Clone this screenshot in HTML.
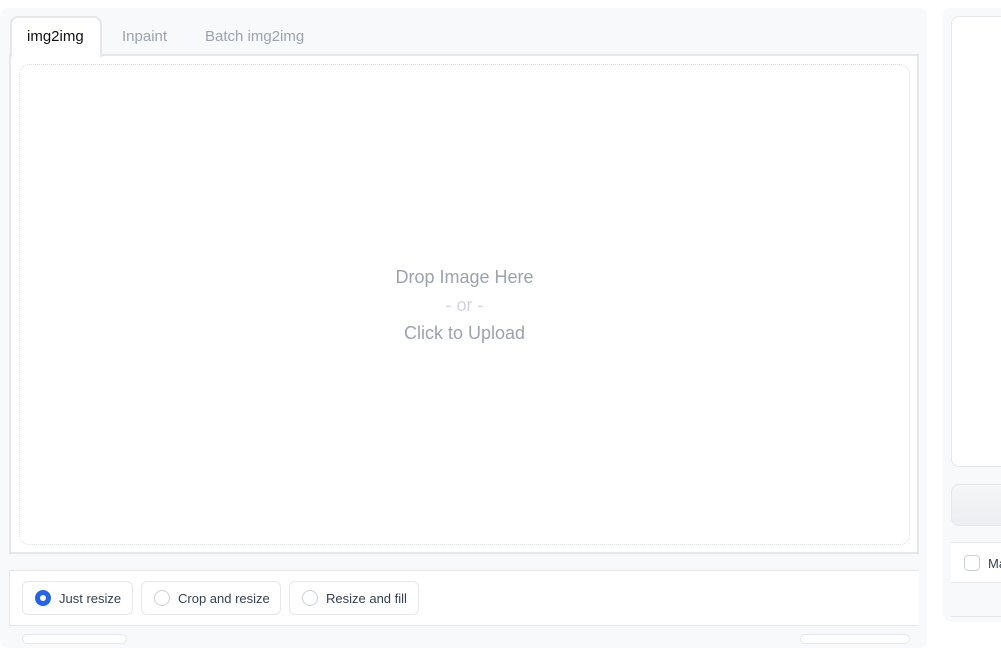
<!DOCTYPE html>
<html><head><style>
*{box-sizing:border-box;margin:0;padding:0}
body{width:1001px;height:638px;background:#fff;font-family:"Liberation Sans",sans-serif;position:relative;overflow:hidden}
.a{position:absolute}
</style></head><body>
<div class="a" style="left:0;top:8px;width:927px;height:640px;background:#f8f9fb;border-radius:8px"></div>
<div class="a" style="left:943px;top:8px;width:70px;height:614px;background:#f8f9fb;border-radius:8px"></div>
<div class="a" style="left:951px;top:16px;width:60px;height:451px;background:#fff;border:1px solid #e5e7eb;border-radius:8px"></div>
<div class="a" style="left:951px;top:484px;width:60px;height:42px;background:linear-gradient(#f5f6f8,#eceef1);border:1px solid #e5e7eb;border-radius:8px"></div>
<div class="a" style="left:951px;top:542px;width:60px;height:41px;background:#fff;border-top:1px solid #e5e7eb;border-bottom:1px solid #e5e7eb"></div>
<div class="a" style="left:964px;top:555px;width:16px;height:16px;border:1px solid #cbd0d6;border-radius:4px;background:#fff"></div>
<div class="a" style="left:988px;top:556px;font-size:13px;color:#374151">Ma</div>
<div class="a" style="left:951px;top:616px;width:60px;border-top:1px solid #e5e7eb"></div>

<div class="a" style="left:9px;top:54px;width:910px;height:500px;background:#fff;border:2px solid #e5e7eb"></div>
<div class="a" style="left:10px;top:16px;width:92px;height:41px;background:#fff;border:2px solid #e5e7eb;border-bottom:none;border-radius:8px 8px 0 0"></div>
<div class="a" style="left:27px;top:28px;font-size:15px;color:#111">img2img</div>
<div class="a" style="left:122px;top:28px;font-size:15px;color:#9ca3af">Inpaint</div>
<div class="a" style="left:205px;top:28px;font-size:15px;color:#9ca3af">Batch img2img</div>
<div class="a" style="left:19px;top:64px;width:891px;height:481px;border:1px dotted #d7dbe0;border-radius:10px"></div>
<div class="a" style="left:19px;top:263px;width:891px;text-align:center;font-size:18px;line-height:28px;color:#9ca3af">Drop Image Here<br><span style="color:#d1d5db">- or -</span><br>Click to Upload</div>

<div class="a" style="left:9px;top:570px;width:910px;height:56px;background:#fff;border-top:1px solid #e5e7eb;border-bottom:1px solid #e5e7eb;border-left:1px solid #e5e7eb"></div>
<div class="a" style="left:22px;top:581px;width:111px;height:34px;border:1px solid #e5e7eb;border-radius:6px;background:#fff"></div>
<div class="a" style="left:35px;top:590px;width:16px;height:16px;border-radius:50%;background:#2563eb"><div class="a" style="left:5px;top:5px;width:6px;height:6px;border-radius:50%;background:#fff"></div></div>
<div class="a" style="left:59px;top:591px;font-size:13px;color:#374151">Just resize</div>
<div class="a" style="left:141px;top:581px;width:140px;height:34px;border:1px solid #e5e7eb;border-radius:6px;background:#fff"></div>
<div class="a" style="left:154px;top:590px;width:16px;height:16px;border-radius:50%;border:1px solid #cbd0d6"></div>
<div class="a" style="left:178px;top:591px;font-size:13px;color:#374151">Crop and resize</div>
<div class="a" style="left:289px;top:581px;width:130px;height:34px;border:1px solid #e5e7eb;border-radius:6px;background:#fff"></div>
<div class="a" style="left:302px;top:590px;width:16px;height:16px;border-radius:50%;border:1px solid #cbd0d6"></div>
<div class="a" style="left:326px;top:591px;font-size:13px;color:#374151">Resize and fill</div>
<div class="a" style="left:22px;top:634px;width:105px;height:10px;border:1px solid #e5e7eb;border-radius:6px;background:#fff"></div>
<div class="a" style="left:800px;top:634px;width:110px;height:10px;border:1px solid #e5e7eb;border-radius:6px;background:#fff"></div>
</body></html>
